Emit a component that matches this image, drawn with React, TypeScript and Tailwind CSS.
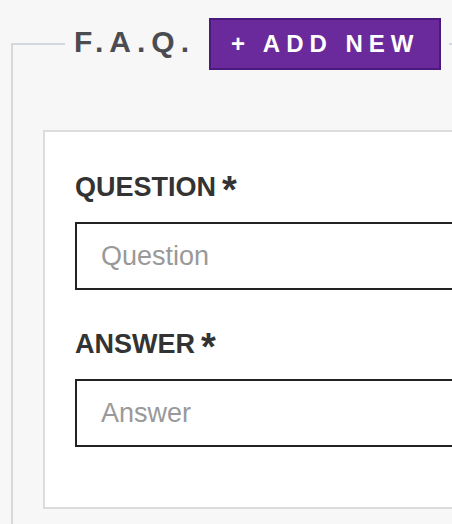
import React from 'react';

const Field = ({ label, placeholder, first }: { label: string; placeholder: string; first?: boolean }) => {
  return (
    <div className={first ? '' : 'mt-[39px]'}>
      <label className="block text-[27px] leading-[31px] font-bold text-[#333]">
        {label}
        <span className="ml-[6px] text-[38px] leading-[0] align-[-7px]">*</span>
      </label>
      <input
        type="text"
        placeholder={placeholder}
        className="mt-[19px] block w-full h-[68px] border-2 border-[#222] bg-white pl-[24px] text-[27px] text-[#333] placeholder:text-[#999] outline-none"
      />
    </div>
  );
};

export default function App() {
  return (
    <div
      className="w-[452px] h-[524px] overflow-hidden bg-[#f7f7f7] pt-[18px] pl-[11px]"
      style={{ fontFamily: '"Liberation Sans", Arial, sans-serif' }}
    >
      <fieldset className="w-[560px] border-2 border-[#d5d8dc] pl-[30px] pt-[60px] pb-[40px]">
        <legend className="ml-[22px] pl-[9px] pr-[8px] text-[30px] leading-none">
          <span className="font-bold tracking-[6px] text-[#4b4c52]">F.A.Q.</span>
          <button className="ml-[14px] inline-block h-[52px] border-2 border-[#4a1a7e] bg-[#6b2a9b] px-[20px] text-[24px] leading-[48px] font-bold tracking-[6px] text-white">
            + ADD NEW
          </button>
        </legend>
        <div className="border-2 border-[#dcdcdc] bg-white pt-[40px] pb-[60px] px-[30px]">
          <Field label="QUESTION" placeholder="Question" first />
          <Field label="ANSWER" placeholder="Answer" />
        </div>
      </fieldset>
    </div>
  );
}
